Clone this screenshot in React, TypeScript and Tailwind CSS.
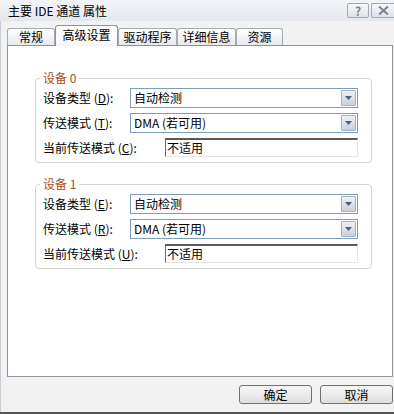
import React from "react";

const font = { fontFamily: "'Noto Sans CJK SC', 'Noto Sans', sans-serif" };

function Combo({ text }: { text: string }) {
  return (
    <div className="flex h-[20px] w-[228px] items-center border border-[#7f9db9] bg-white">
      <div className="flex-1 pl-[3px] text-[12px] leading-[14px] text-black">{text}</div>
      <div className="mr-px flex h-[16px] w-[15px] items-center justify-center rounded-[1px] border border-[#a3b1c4] bg-gradient-to-b from-[#eef1f5] to-[#c9d1dc]">
        <svg width="7" height="4" viewBox="0 0 7 4">
          <path d="M0 0 H7 L3.5 4 Z" fill="#4d5e7e" />
        </svg>
      </div>
    </div>
  );
}

function Field({ text }: { text: string }) {
  return (
    <div className="flex h-[19px] w-[193px] items-center border-t-2 border-l border-r border-b border-t-[#5a5a5a] border-l-[#6a6a6a] border-r-[#e4e4e4] border-b-[#e4e4e4] bg-white">
      <div className="pl-[1px] text-[12px] leading-[14px] text-black">{text}</div>
    </div>
  );
}

function Label({ main, k, w }: { main: string; k: string; w: string }) {
  return (
    <div className={w + " text-[12px] leading-[14px] text-black"}>
      {main} (<span className="underline">{k}</span>):
    </div>
  );
}

function Group({ title, k1, k2, k3 }: { title: string; k1: string; k2: string; k3: string }) {
  return (
    <fieldset className="rounded-[4px] border border-[#d5d5d0] pl-[7px] pr-[12px] pb-[5px]">
      <legend className="-ml-[3px] px-[3px] text-[12px] leading-[16px] text-[#b04a22]">{title}</legend>
      <div className="flex flex-col gap-[5px] pt-[2px] text-[12px] leading-[14px]">
        <div className="flex items-center">
          <Label main="设备类型" k={k1} w="w-[87px]" />
          <Combo text="自动检测" />
        </div>
        <div className="flex items-center">
          <Label main="传送模式" k={k2} w="w-[87px]" />
          <Combo text="DMA (若可用)" />
        </div>
        <div className="flex items-center">
          <Label main="当前传送模式" k={k3} w="w-[122px]" />
          <Field text="不适用" />
        </div>
      </div>
    </fieldset>
  );
}

function Tab({ label, w, selected }: { label: string; w: string; selected?: boolean }) {
  if (selected) {
    return (
      <div className={w + " relative z-10 -mb-px flex h-[21px] items-center justify-center rounded-t-[3px] border border-b-0 border-[#8c9499] bg-gradient-to-b from-[#ffffff] to-[#f7f7f7] pb-[2px] text-[12px] leading-[14px] text-black"}>
        {label}
      </div>
    );
  }
  return (
    <div className={w + " flex h-[17px] items-center justify-center rounded-t-[3px] border border-b-0 border-[#a5acb0] bg-gradient-to-b from-[#ffffff] to-[#e6e9ee] text-[12px] leading-[14px] text-black"}>
      {label}
    </div>
  );
}

export default function App() {
  return (
    <div style={font} className="flex h-[414px] w-[394px] flex-col overflow-hidden border-b-2 border-[#555555] bg-[#f2f2f2]">
      {/* Title bar */}
      <div className="flex h-[21px] items-center bg-gradient-to-b from-[#f2f4f7] to-[#e4e8ee] pl-[8px]">
        <div className="flex-1 text-[12px] leading-[14px] text-black">主要 IDE 通道 属性</div>
        <div className="flex gap-[2px]">
          <div className="flex h-[15px] w-[22px] items-center justify-center rounded-[2px] border border-[#a2a9b3] bg-gradient-to-b from-[#f6f7f9] to-[#dde2e8] text-[12px] font-bold leading-[12px] text-[#7a8290]">
            ?
          </div>
          <div className="flex h-[15px] w-[23px] items-center justify-center rounded-l-[2px] border border-r-0 border-[#a2a9b3] bg-gradient-to-b from-[#f6f7f9] to-[#dde2e8]">
            <svg width="11" height="9" viewBox="0 0 11 9">
              <path d="M1 0.5 L5.5 4.5 L10 0.5 M1 8.5 L5.5 4.5 L10 8.5" stroke="#7a8290" strokeWidth="2" fill="none" />
            </svg>
          </div>
        </div>
      </div>

      {/* Body */}
      <div className="flex flex-1 flex-col border-l border-[#c9ced6] pl-[6px] pt-[4px]">
        <div className="flex h-[20px] items-end">
          <Tab label="常规" w="w-[48px]" />
          <Tab label="高级设置" w="w-[63px]" selected />
          <Tab label="驱动程序" w="w-[59px]" />
          <Tab label="详细信息" w="w-[59px]" />
          <Tab label="资源" w="w-[47px]" />
        </div>
        <div className="flex h-[332px] w-[386px] flex-col gap-[13px] border border-[#8c9499] bg-white pl-[27px] pr-[20px] pt-[24px]">
          <Group title="设备 0" k1="D" k2="T" k3="C" />
          <Group title="设备 1" k1="E" k2="R" k3="U" />
        </div>
        <div className="mt-[8px] flex justify-end gap-[8px] pr-[1px]">
          <button className="flex h-[19px] w-[73px] items-center justify-center rounded-[3px] border border-[#707070] bg-gradient-to-b from-[#f7f7f7] to-[#dedede] text-[12px] leading-[14px] text-black">
            确定
          </button>
          <button className="flex h-[19px] w-[73px] items-center justify-center rounded-[3px] border border-[#707070] bg-gradient-to-b from-[#f7f7f7] to-[#dedede] text-[12px] leading-[14px] text-black">
            取消
          </button>
        </div>
      </div>
    </div>
  );
}
